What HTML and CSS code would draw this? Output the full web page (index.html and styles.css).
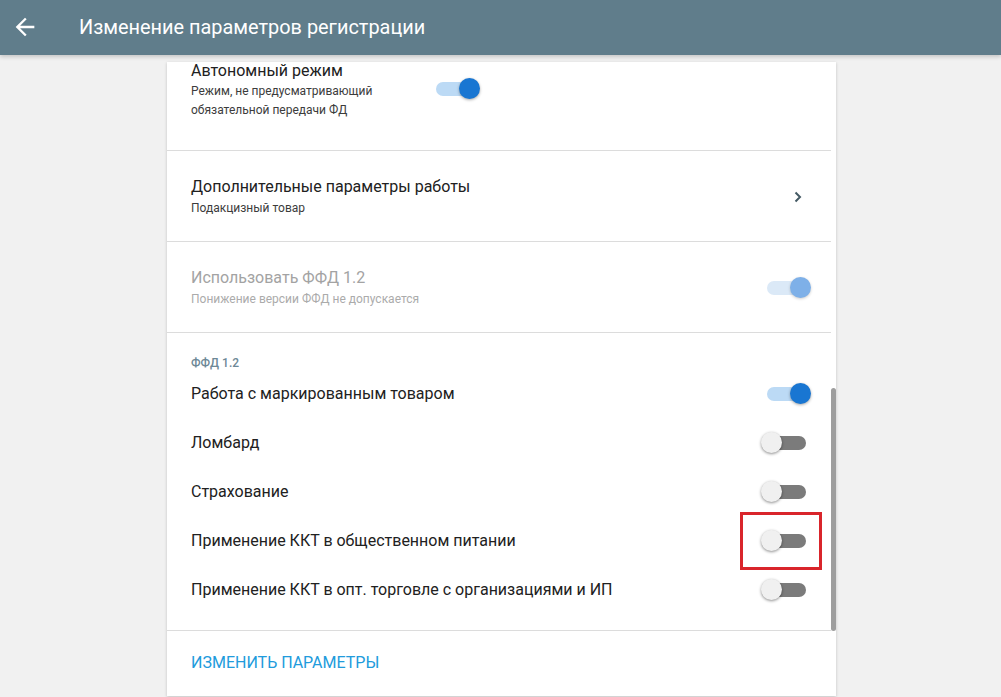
FILE: index.html
```html
<!DOCTYPE html>
<html lang="ru">
<head>
<meta charset="utf-8">
<title>Изменение параметров регистрации</title>
<link rel="stylesheet" href="styles.css">
</head>
<body>
<header class="appbar">
  <svg class="back" width="28" height="28" viewBox="0 0 24 24"><path d="M20 11H7.83l5.59-5.59L12 4l-8 8 8 8 1.41-1.41L7.83 13H20v-2z" fill="#fff"/></svg>
  <h1 class="appbar-title">Изменение параметров регистрации</h1>
</header>
<main class="page">
  <section class="card">
    <div class="content">
      <div class="row row-first">
        <div class="text text-narrow">
          <div class="title">Автономный режим</div>
          <div class="sub">Режим, не предусматривающий обязательной передачи ФД</div>
        </div>
        <div class="sw on"><span class="track"></span><span class="thumb"></span></div>
      </div>
      <div class="row row-mid">
        <div class="text">
          <div class="title">Дополнительные параметры работы</div>
          <div class="sub">Подакцизный товар</div>
        </div>
        <svg class="chev" width="24" height="24" viewBox="0 0 24 24"><path d="M9.5 7.5l4.5 4.5-4.5 4.5" fill="none" stroke="#455a64" stroke-width="2"/></svg>
      </div>
      <div class="row row-mid disabled">
        <div class="text">
          <div class="title">Использовать ФФД 1.2</div>
          <div class="sub">Понижение версии ФФД не допускается</div>
        </div>
        <div class="sw on dis"><span class="track"></span><span class="thumb"></span></div>
      </div>
      <div class="group">
        <div class="group-head">ФФД 1.2</div>
        <div class="item"><span class="title">Работа с маркированным товаром</span><div class="sw on"><span class="track"></span><span class="thumb"></span></div></div>
        <div class="item"><span class="title">Ломбард</span><div class="sw"><span class="track"></span><span class="thumb"></span></div></div>
        <div class="item"><span class="title">Страхование</span><div class="sw"><span class="track"></span><span class="thumb"></span></div></div>
        <div class="item"><span class="title">Применение ККТ в общественном питании</span><div class="sw marked"><span class="track"></span><span class="thumb"></span><span class="mark"></span></div></div>
        <div class="item"><span class="title">Применение ККТ в опт. торговле с организациями и ИП</span><div class="sw"><span class="track"></span><span class="thumb"></span></div></div>
      </div>
      <div class="actions">
        <button class="btn">Изменить параметры</button>
      </div>
    </div>
    <div class="scrolltrack"><div class="scrollthumb"></div></div>
  </section>
</main>
</body>
</html>
```

FILE: styles.css
```css
html, body {
  margin: 0;
  padding: 0;
  height: 100%;
  overflow: hidden;
}
body {
  background: #f1f1f1;
  font-family: Roboto, "Noto Sans", "Liberation Sans", sans-serif;
  color: #212121;
}
.appbar {
  height: 55px;
  background: #607d8b;
  display: flex;
  align-items: center;
  box-shadow: 0 2px 4px rgba(0,0,0,0.18);
  position: relative;
  z-index: 2;
}
.back {
  margin-left: 11px;
  margin-top: -1px;
}
.appbar-title {
  margin: 0 0 0 40px;
  font-size: 19.9px;
  font-weight: 400;
  color: #fff;
  letter-spacing: 0;
}
.page {
  padding-left: 167px;
  padding-top: 7px;
}
.card {
  width: 669px;
  height: 634px;
  background: #fff;
  box-shadow: 0 1px 3px rgba(0,0,0,0.2);
  display: flex;
  overflow: hidden;
}
.content {
  flex: 1;
  display: flex;
  flex-direction: column;
}
.row {
  display: flex;
  align-items: center;
  justify-content: space-between;
  padding: 0 20px 0 24px;
  border-bottom: 1px solid #dcdcdc;
}
.row-first {
  justify-content: flex-start;
  height: 88px;
  align-items: flex-start;
  padding-top: 0;
}
.row-first .title { line-height: 17px; }
.row-first .sub { margin-top: 3px; }
.row-first .sw { margin-top: 16px; margin-left: 0; }
.text-narrow { width: 239px; }
.row-mid { height: 90px; }
.title {
  font-size: 16px;
  line-height: 20px;
  color: #212121;
}
.sub {
  font-size: 12px;
  line-height: 19px;
  color: #3c3c3c;
}
.row-mid .sub { margin-top: 2px; }
.row-mid .text { margin-top: 3px; }
.disabled .title { color: #a3a3a3; }
.disabled .sub { color: #ababab; }
.chev { margin-right: 1px; margin-top: 2px; }

.group {
  padding: 22px 20px 16px 24px;
  border-bottom: 1px solid #dcdcdc;
}
.group-head {
  font-size: 12px;
  line-height: 16px;
  font-weight: 500;
  color: #6d8896;
  margin-bottom: -2px;
}
.item {
  height: 49px;
  display: flex;
  align-items: center;
  justify-content: space-between;
}
.sw {
  position: relative;
  width: 50px;
  height: 21px;
  flex: none;
}
.sw .track {
  position: absolute;
  left: 5px;
  right: 5px;
  top: 4px;
  height: 14px;
  border-radius: 7px;
  background: #7b7b7b;
}
.sw .thumb {
  position: absolute;
  top: 0;
  left: 0;
  width: 21px;
  height: 21px;
  border-radius: 50%;
  background: #f0f0f0;
  box-shadow: 0 1px 3px rgba(0,0,0,0.45);
}
.sw.on .track { background: #bcdaf5; left: 6px; right: 5px; }
.sw.on .thumb { left: auto; right: 0; background: #1976d2; box-shadow: 0 1px 3px rgba(0,0,0,0.35); }
.sw.on.dis .track { background: #dbe9f7; }
.sw.on.dis .thumb { background: #7eb0e8; box-shadow: 0 1px 3px rgba(0,0,0,0.2); }
.sw .mark {
  position: absolute;
  left: -21px;
  right: -11px;
  top: -18px;
  bottom: -19px;
  border: 3px solid #d9252b;
}
.actions {
  flex: 1;
  padding: 0 24px;
  display: flex;
  align-items: flex-start;
}
.btn {
  margin-top: 22px;
  padding: 0;
  border: 0;
  background: none;
  font-family: Roboto, "Noto Sans", "Liberation Sans", sans-serif;
  font-size: 16px;
  line-height: 20px;
  text-transform: uppercase;
  color: #219bdc;
  cursor: pointer;
}
.scrolltrack {
  width: 5px;
  flex: none;
  display: flex;
  flex-direction: column;
}
.scrollthumb {
  margin-top: 326px;
  height: 243px;
  background: #9e9e9e;
  border-radius: 3px;
}
```
